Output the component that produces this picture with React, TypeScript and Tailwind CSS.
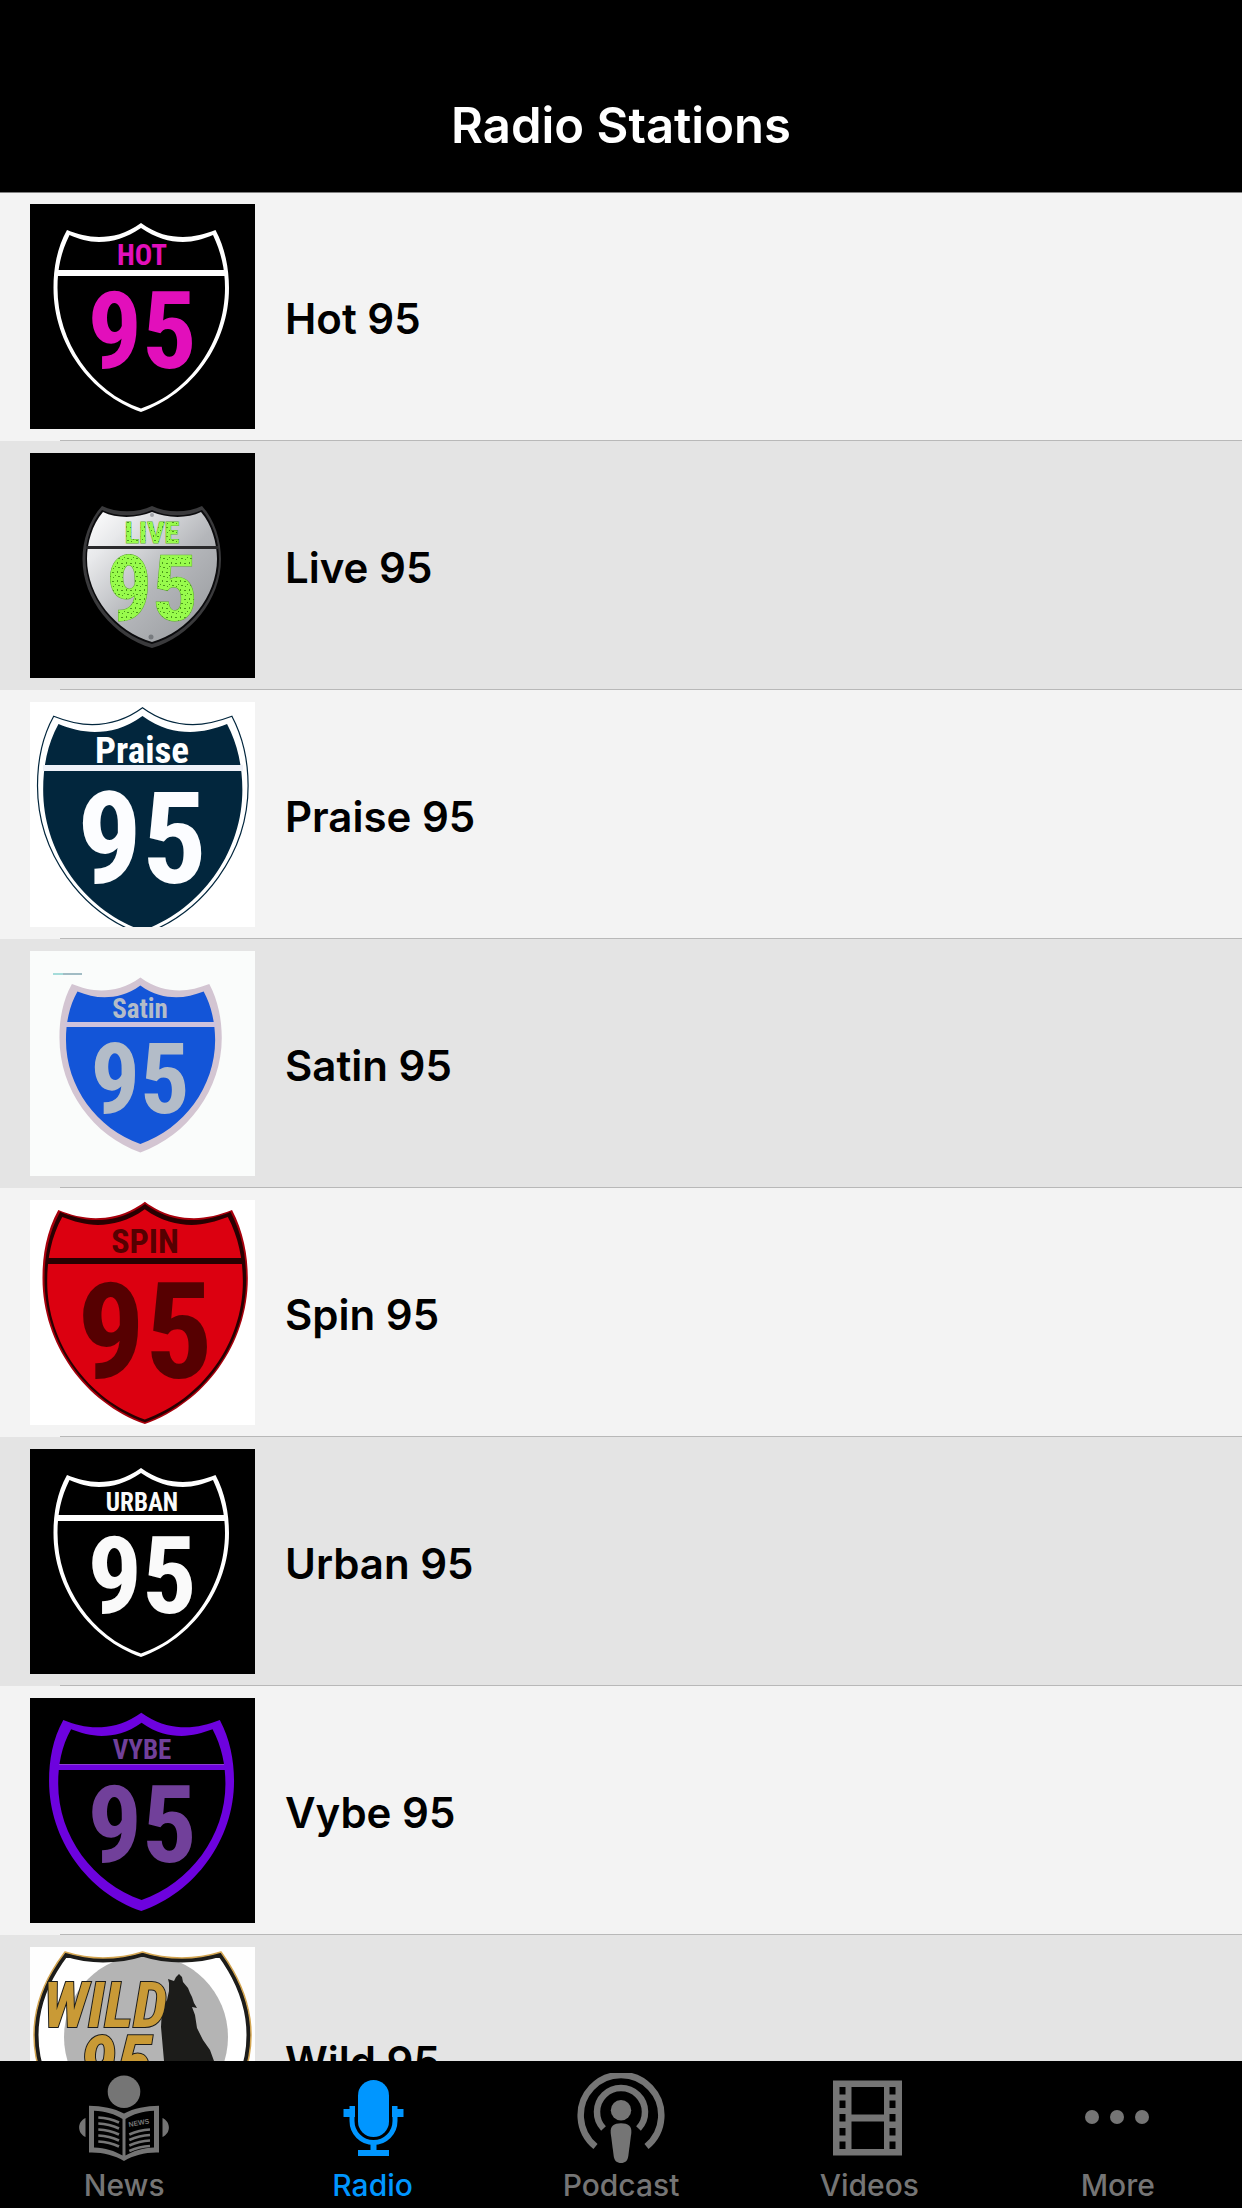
import type { ReactNode } from 'react'

const OUTLINE =
  'M111 19C96 30 82 33 69 33C58 33 47 30 37 26C27 44 23.5 64 23.5 84C23.5 140 60 190 111 208C162 190 199 140 199 84C199 64 195 44 185.5 26C175 30 164 33 153 33C140 33 126 30 111 19Z'
const INLINE =
  'M111 24C96 34 83 38 69 38C58 38 49 35 39.500 31C31 48 27.500 65 27.500 84C27.500 138 62 188 111 204.500C160 188 195 138 195 84C195 65 191 48 183 31C173 35 164 38 153 38C139 38 126 34 111 24Z'

const NARROW = "font-['Liberation_Sans_Narrow','Roboto_Condensed','DejaVu_Sans_Condensed',sans-serif] font-bold"

type LetteringProps = {
  name: string
  nameSize: number
  nameY: number
  size: number
  y: number
  x?: number
  fill: string
  numberFill?: string
}

function Lettering({ name, nameSize, nameY, size, y, x = 112, fill, numberFill }: LetteringProps) {
  return (
    <g className={NARROW} textAnchor="middle">
      <text x={x} y={nameY} fontSize={nameSize} fill={fill}>{name}</text>
      <text x={x} y={y} fontSize={size} fill={numberFill ?? fill}>95</text>
    </g>
  )
}

function Logo({ bg, children }: { bg: string; children: ReactNode }) {
  return (
    <svg viewBox="0 0 225 225" className="size-[225px] shrink-0" aria-hidden="true">
      <rect width="225" height="225" fill={bg} />
      {children}
    </svg>
  )
}

function HotLogo() {
  return (
    <Logo bg="#000">
      <path d={OUTLINE} fill="#fff" />
      <path d={INLINE} fill="#000" />
      <path d="M27 66h168v6H27z" fill="#fff" />
      <Lettering name="HOT" nameSize={29} nameY={61} size={108} y={164} fill="#e20fbb" />
    </Logo>
  )
}

function LiveLogo() {
  return (
    <Logo bg="#000">
      <defs>
        <linearGradient id="steel" x1="0" y1="0" x2="1" y2="1">
          <stop offset="0" stopColor="#fff" />
          <stop offset="0.2" stopColor="#e8e9eb" />
          <stop offset="0.55" stopColor="#b4b6ba" />
          <stop offset="1" stopColor="#94979a" />
        </linearGradient>
        <pattern id="speckle" width="9" height="9" patternUnits="userSpaceOnUse">
          <rect width="9" height="9" fill="#98fb4c" />
          <path d="M1 2h2v1H1zM6 1h1v2H6zM4 5h1v1H4zM7 6h2v1H7zM2 7h1v1H2z" fill="#4c9a1c" />
        </pattern>
      </defs>
      <path
        d="M122 53C108 60 86 60 72 53C59 67 52.500 88 52.500 106C52.500 147 84 184 122 195C160 184 191 147 191 106C191 88 185 67 172 53C158 60 136 60 122 53Z"
        fill="#3a3a3c"
      />
      <path
        d="M122 57C108 64 86 64 72 57C61 70 55.500 88 55.500 106C55.500 144 85 181 122 191C159 181 189 144 189 106C189 88 183 70 172 57C158 64 136 64 122 57Z"
        fill="#0b0b0d"
      />
      <path
        d="M122 59C108 65 87 66 73 59C62 72 57 90 57 106C57 143 86 179 122 189C158 179 187 143 187 106C187 90 182 72 171 59C157 66 136 65 122 59Z"
        fill="url(#steel)"
      />
      <path d="M56 93h132v3H56z" fill="#2a2a2c" />
      <circle cx="122" cy="62" r="2" fill="#a2a5aa" />
      <circle cx="121" cy="184" r="2.500" fill="#777a7e" />
      <g stroke="#5fae2c" strokeWidth="1" paintOrder="stroke">
        <Lettering name="LIVE" nameSize={30} nameY={90} size={90} y={167} x={122} fill="url(#speckle)" />
      </g>
    </Logo>
  )
}

function PraiseLogo() {
  return (
    <Logo bg="#fff">
      <path d={OUTLINE} transform="translate(-20.700 -17) scale(1.2)" fill="#fff" stroke="#02263d" strokeWidth="1" />
      <path d={OUTLINE} transform="translate(-13.500 -7.500) scale(1.135)" fill="#02263d" />
      <path d="M13 63h200v6H13z" fill="#eef1f8" />
      <Lettering name="Praise" nameSize={37} nameY={61} size={128} y={181} fill="#fff" numberFill="#fcfdff" />
    </Logo>
  )
}

function SatinLogo() {
  return (
    <Logo bg="#fafcfb">
      <path d="M23 22h10v2H23z" fill="#a5dcda" />
      <path d="M33 22h19v2H33z" fill="#a1bcc4" />
      <path d={OUTLINE} transform="translate(7.700 9) scale(0.925)" fill="#d3c5d2" />
      <path d={OUTLINE} transform="translate(16 18.700) scale(0.85 0.838)" fill="#1355d8" />
      <path d="M35 71h151v5H35z" fill="#cfc3dc" />
      <Lettering name="Satin" nameSize={27} nameY={67} size={98} y={162} x={110} fill="#b3bcc8" />
    </Logo>
  )
}

function SpinLogo() {
  return (
    <Logo bg="#fff">
      <path d={OUTLINE} transform="translate(-15 -20.600) scale(1.17 1.176)" fill="#a8000c" />
      <path d={OUTLINE} transform="translate(-12.500 -18) scale(1.149 1.155)" fill="#280001" />
      <path d={OUTLINE} transform="translate(-9 -11.800) scale(1.115 1.112)" fill="#dc0010" />
      <path d="M18 58h196v6H18z" fill="#280001" />
      <Lettering name="SPIN" nameSize={34} nameY={53} size={134} y={178} x={115} fill="#560001" />
    </Logo>
  )
}

function UrbanLogo() {
  return (
    <Logo bg="#000">
      <path d={OUTLINE} fill="#fff" />
      <path d={INLINE} fill="#000" />
      <path d="M27 66h168v6H27z" fill="#fff" />
      <Lettering name="URBAN" nameSize={25} nameY={62} size={108} y={164} fill="#fafafa" />
    </Logo>
  )
}

function VybeLogo() {
  return (
    <Logo bg="#000">
      <path d={OUTLINE} transform="translate(-5.700 -5.300) scale(1.054 1.05)" fill="#6d02de" />
      <path d={OUTLINE} transform="translate(5.800 7) scale(0.953 0.937)" fill="#000" />
      <path d="M28 66h168v6H28z" fill="#6d02de" />
      <path d="M29 66h165v1H29z" fill="#8b3fd0" />
      <Lettering name="VYBE" nameSize={27} nameY={61} size={108} y={164} fill="#71409a" />
    </Logo>
  )
}

function WildLogo() {
  const shield =
    'M112.500 5C100 9 88 11 73 11C60 11 48 9 35 5C15 31 4 60 4 88C4 150 55 205 112.500 222C170 205 221 150 221 88C221 60 210 31 191 5C178 9 165 11 152 11C137 11 125 9 112.500 5Z'
  return (
    <Logo bg="#fefefe">
      <defs>
        <clipPath id="wild-shield">
          <path d={shield} />
        </clipPath>
      </defs>
      <g clipPath="url(#wild-shield)">
        <rect width="225" height="225" fill="#fff" />
        <circle cx="116" cy="90" r="82" fill="#b4b4b4" />
        <path
          d="M138 32L144 34L146 30L149 27L152 30L153 35L158 41L160 46L162 50L164 56L167 61L162 60L165 68L167 81L173 93L180 103L184 114L194 150L190 190H140L134 114L131 80L132 61L137 53L139 44L139 36Z"
          fill="#1c1c1a"
        />
        <path d={shield} fill="none" stroke="#1c1c1a" strokeWidth="9" />
      </g>
      <path d={shield} fill="none" stroke="#d3a551" strokeWidth="1.500" />
      <g className={NARROW} fontStyle="italic" fill="#c99a36" stroke="#1c1c1a" strokeWidth="2" paintOrder="stroke">
        <text x="13" y="80" fontSize="62">WILD</text>
        <text x="50" y="141" fontSize="74">95</text>
      </g>
    </Logo>
  )
}

function NewsIcon() {
  return (
    <svg viewBox="0 0 90 90" className="size-[90px]" fill="currentColor" aria-hidden="true">
      <circle cx="45" cy="18.700" r="16.300" />
      <path d="M6.500 45v19C-2 60-2 49 6.500 45ZM83.500 45v19C92 60 92 49 83.500 45Z" />
      <path
        fillRule="evenodd"
        d="M10 32.700C23 33 35 35 45 40.500C55 35 67 33 80 32.700V79.500C67 79 55 82 45 88C35 82 23 79 10 79.500ZM15 37.700V74.500C26 75 36 78 43.500 82.500V46C36 41 26 38 15 37.700ZM75 37.700C64 38 54 41 46.500 46V82.500C54 78 64 75 75 74.500Z"
      />
      <g fill="none" stroke="currentColor" strokeWidth="2.600">
        <path d="M19.300 44.500q11 .5 20.700 5M19.300 50.500q11 .5 20.700 5M19.300 56.500q11 .5 20.700 5M19.300 62.500q11 .5 20.700 5M19.300 68.500q11 .5 20.700 5" />
        <path d="M50.300 61.500q10-4.500 20.700-5M50.300 67q10-4.500 20.700-5M50.300 72.500q10-4.500 20.700-5M50.300 78q10-4.500 20.700-5" />
      </g>
      <text x="50" y="54" fontSize="7" transform="rotate(-10 50 54)" className="font-['Liberation_Sans',sans-serif] font-bold">NEWS</text>
    </svg>
  )
}

function RadioIcon() {
  return (
    <svg viewBox="0 0 90 90" className="size-[90px]" fill="currentColor" aria-hidden="true">
      <rect x="30" y="7" width="31" height="57" rx="15.500" />
      <path d="M15.500 36H21.500V33H27V44H15.500ZM75.500 36H69.500V33H64V44H75.500Z" />
      <path d="M24 40V48a21.500 21.500 0 0 0 43 0V40" fill="none" stroke="currentColor" strokeWidth="5" />
      <path d="M42.500 71h6v6H61v6H30v-6H42.500Z" />
    </svg>
  )
}

function PodcastIcon() {
  return (
    <svg viewBox="0 0 90 90" className="size-[90px]" fill="currentColor" aria-hidden="true">
      <g fill="none" stroke="currentColor" strokeWidth="6.500">
        <path d="M19.500 73.500A40.300 40.300 0 1 1 70.500 73.500" />
        <path d="M27.500 55.500A24 24 0 1 1 62.500 55.500" />
      </g>
      <circle cx="45" cy="37.300" r="10.200" />
      <path d="M45 50.300C52 50.300 56 53 55.300 60L52.300 83C51.600 88 49 90 45 90C41 90 38.400 88 37.700 83L34.700 60C34 53 38 50.300 45 50.300Z" />
    </svg>
  )
}

function VideosIcon() {
  return (
    <svg viewBox="0 0 90 90" className="size-[90px]" fill="currentColor" aria-hidden="true">
      <path
        fillRule="evenodd"
        d="M9 7.500h69v75H9ZM15.500 14v7.500h6V14ZM15.500 27.500V35h6v-7.500ZM15.500 41v7.500h6V41ZM15.500 55v7.500h6V55ZM15.500 68.500V76h6v-7.500ZM65.500 14v7.500h6V14ZM65.500 27.500V35h6v-7.500ZM65.500 41v7.500h6V41ZM65.500 55v7.500h6V55ZM65.500 68.500V76h6v-7.500ZM27.500 14v27.500h32.500V14ZM27.500 48.500V76h32.500V48.500Z"
      />
    </svg>
  )
}

function MoreIcon() {
  return (
    <svg viewBox="0 0 90 90" className="size-[90px]" fill="currentColor" aria-hidden="true">
      <circle cx="19" cy="44" r="7" />
      <circle cx="44" cy="44" r="7" />
      <circle cx="69" cy="44" r="7" />
    </svg>
  )
}

const stations = [
  { name: 'Hot 95', logo: HotLogo },
  { name: 'Live 95', logo: LiveLogo },
  { name: 'Praise 95', logo: PraiseLogo },
  { name: 'Satin 95', logo: SatinLogo },
  { name: 'Spin 95', logo: SpinLogo },
  { name: 'Urban 95', logo: UrbanLogo },
  { name: 'Vybe 95', logo: VybeLogo },
  { name: 'Wild 95', logo: WildLogo },
]

const tabs = [
  { label: 'News', icon: NewsIcon },
  { label: 'Radio', icon: RadioIcon, active: true },
  { label: 'Podcast', icon: PodcastIcon },
  { label: 'Videos', icon: VideosIcon },
  { label: 'More', icon: MoreIcon },
]

export default function App() {
  return (
    <div className="flex h-screen flex-col bg-[#f3f3f3] font-['Inter',sans-serif] text-black">
      <header className="relative flex h-48 shrink-0 items-end justify-center bg-black pb-8 shadow-[0_1px_0_#808080]">
        <h1 className="text-[49px] leading-[68px] font-semibold text-white">Radio Stations</h1>
      </header>

      <main className="min-h-0 flex-1 overflow-y-auto [scrollbar-width:none]">
        <ul>
          {stations.map((station) => (
            <li key={station.name} className="bg-[#f3f3f3] even:bg-[#e4e4e4]">
              <a href="#" className="flex items-center gap-[30px] px-[30px] pt-3 pb-[11px]">
                <station.logo />
                <span className="pt-1 text-[42px] leading-[52px] font-semibold">{station.name}</span>
              </a>
              <div className="ml-[60px] h-px bg-[#b8b8b8]" />
            </li>
          ))}
        </ul>
      </main>

      <nav className="grid h-[147px] shrink-0 grid-cols-5 bg-black">
        {tabs.map((tab) => (
          <button
            key={tab.label}
            type="button"
            className={`flex flex-col items-center pt-3 ${tab.active ? 'text-[#0096ff]' : 'text-[#757575]'}`}
          >
            <tab.icon />
            <span className="text-[30px] leading-[44px] font-medium">{tab.label}</span>
          </button>
        ))}
      </nav>
    </div>
  )
}
